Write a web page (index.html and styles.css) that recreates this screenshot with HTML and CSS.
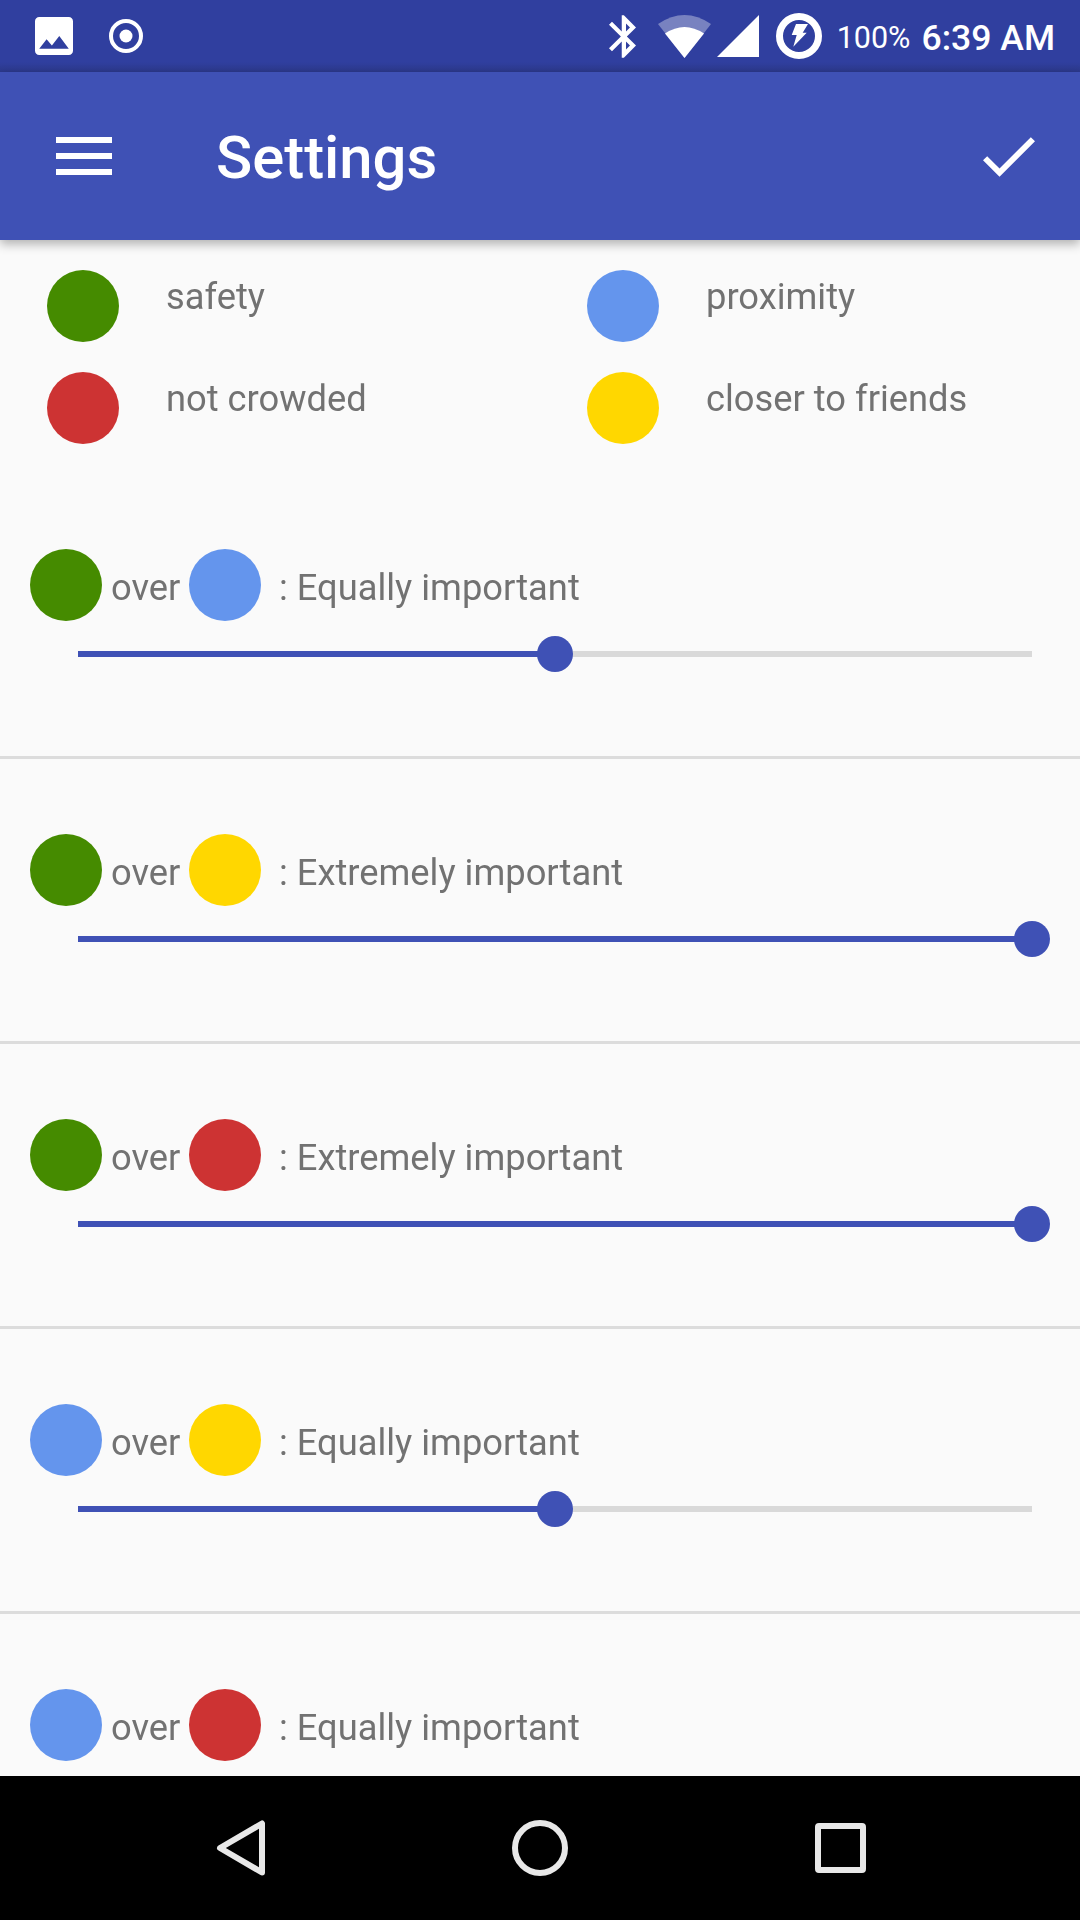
FILE: index.html
```html
<!DOCTYPE html>
<html lang="en">
<head>
<meta charset="utf-8">
<title>Settings</title>
<link rel="stylesheet" href="styles.css">
</head>
<body>
<div class="screen">
  <header class="statusbar">
    <div class="status-left">
      <svg class="ic-image" viewBox="3 3 18 18"><path fill="#fff" d="M21 19V5c0-1.1-.9-2-2-2H5c-1.1 0-2 .9-2 2v14c0 1.100.9 2 2 2h14c1.100 0 2-.9 2-2zM8.500 13.500l2.500 3.010L14.500 12l4.500 6H5l3.500-4.500z"/></svg>
      <svg class="ic-radio" viewBox="0 0 34 34"><circle cx="17" cy="17" r="15" fill="none" stroke="#fff" stroke-width="4"/><circle cx="17" cy="17" r="6.500" fill="#fff"/></svg>
    </div>
    <div class="status-right">
      <svg class="ic-bt" viewBox="5 2 12.710 20"><path fill="#fff" d="M17.710 7.710L12 2h-1v7.590L6.410 5 5 6.410 10.590 12 5 17.590 6.410 19 11 14.410V22h1l5.710-5.710-4.300-4.290 4.300-4.290zM13 5.830l1.880 1.880L13 9.590V5.830zm1.880 10.460L13 18.170v-3.760l1.880 1.880z"/></svg>
      <svg class="ic-wifi" viewBox="0 0 53 43"><path fill="#fff" fill-opacity=".35" d="M26.500 43L0 9Q26.500-9 53 9Z"/><path fill="#fff" d="M26.500 43L7 18.500Q26.500 5.500 46 18.500Z"/></svg>
      <svg class="ic-signal" viewBox="0 0 42 42"><path fill="#fff" d="M0 42L42 0V42Z"/></svg>
      <svg class="ic-batt" viewBox="0 0 46 46"><circle cx="23" cy="23" r="19.500" fill="none" stroke="#fff" stroke-width="7"/><path fill="#fff" d="M20 11H32L26.700 19.700H30.700L17.300 33.700L20.700 22H15.700Z"/></svg>
      <span class="batt-text">100%</span>
      <span class="clock">6:39 AM</span>
    </div>
  </header>

  <div class="toolbar">
    <div class="menu"><span></span><span></span><span></span></div>
    <h1 class="title">Settings</h1>
    <svg class="ic-check" viewBox="3.410 5.590 17.590 13.410"><path fill="#fff" d="M9 16.170L4.830 12l-1.420 1.410L9 19 21 7l-1.410-1.410z"/></svg>
  </div>

  <main class="content">
    <section class="legend">
      <div class="legend-item"><i class="dot green"></i><span class="legend-label">safety</span></div>
      <div class="legend-item"><i class="dot blue"></i><span class="legend-label">proximity</span></div>
      <div class="legend-item"><i class="dot red"></i><span class="legend-label">not crowded</span></div>
      <div class="legend-item"><i class="dot gold"></i><span class="legend-label">closer to friends</span></div>
    </section>

    <section class="row">
      <div class="compare"><i class="dot green"></i><span class="over">over</span><i class="dot blue"></i><span class="verdict">: Equally important</span></div>
      <div class="slider"><div class="fill" style="width:50%"></div><div class="thumb" style="left:50%"></div></div>
    </section>
    <section class="row">
      <div class="compare"><i class="dot green"></i><span class="over">over</span><i class="dot gold"></i><span class="verdict">: Extremely important</span></div>
      <div class="slider"><div class="fill" style="width:100%"></div><div class="thumb" style="left:100%"></div></div>
    </section>
    <section class="row">
      <div class="compare"><i class="dot green"></i><span class="over">over</span><i class="dot red"></i><span class="verdict">: Extremely important</span></div>
      <div class="slider"><div class="fill" style="width:100%"></div><div class="thumb" style="left:100%"></div></div>
    </section>
    <section class="row">
      <div class="compare"><i class="dot blue"></i><span class="over">over</span><i class="dot gold"></i><span class="verdict">: Equally important</span></div>
      <div class="slider"><div class="fill" style="width:50%"></div><div class="thumb" style="left:50%"></div></div>
    </section>
    <section class="row">
      <div class="compare"><i class="dot blue"></i><span class="over">over</span><i class="dot red"></i><span class="verdict">: Equally important</span></div>
      <div class="slider"><div class="fill" style="width:50%"></div><div class="thumb" style="left:50%"></div></div>
    </section>
  </main>

  <nav class="navbar">
    <div class="nav-slot"><svg class="ic-back" viewBox="0 0 49 56"><path fill="none" stroke="#e8e8e8" stroke-width="6" stroke-linejoin="round" d="M4 28L46 3.500V52.500Z"/></svg></div>
    <div class="nav-slot"><div class="ic-home"></div></div>
    <div class="nav-slot"><div class="ic-recent"></div></div>
  </nav>
</div>
</body>
</html>
```

FILE: styles.css
```css
* { box-sizing: border-box; }
html, body { margin: 0; padding: 0; }
body { font-family: Roboto, "Noto Sans", sans-serif; background: #fafafa; }

.screen {
  width: 1080px;
  height: 1920px;
  display: flex;
  flex-direction: column;
  overflow: hidden;
}

.statusbar {
  height: 72px;
  flex: none;
  display: flex;
  justify-content: space-between;
  align-items: center;
  padding: 0 25px 0 35px;
  color: #fff;
  background: linear-gradient(#303f9f 0, #303f9f 62px, #2c398c 72px);
}
.status-left, .status-right { display: flex; align-items: center; }
svg { display: block; flex: none; }
.ic-image { width: 38px; height: 38px; }
.ic-radio { width: 34px; height: 34px; margin-left: 36px; }
.ic-bt { width: 27px; height: 43px; }
.ic-wifi { width: 53px; height: 43px; margin-left: 22px; }
.ic-signal { width: 42px; height: 42px; margin-left: 6px; }
.ic-batt { width: 46px; height: 46px; margin-left: 17px; }
.batt-text { font-size: 30.5px; font-weight: 400; margin: 3px 0 0 15px; }
.clock { font-size: 35.6px; font-weight: 500; margin: 4px 0 0 11px; }

.toolbar {
  height: 168px;
  flex: none;
  position: relative;
  z-index: 1;
  display: flex;
  align-items: center;
  padding: 0 45px 0 56px;
  background: #3f51b5;
  box-shadow: 0 4px 10px rgba(0, 0, 0, .3);
  color: #fff;
}
.menu { width: 56px; display: flex; flex-direction: column; gap: 10px; }
.menu span { height: 6px; background: #fff; }
.title { margin: 3px 0 0 104px; font-size: 59.8px; font-weight: 500; flex: 1; }
.ic-check { width: 52px; height: 40px; margin-top: 2px; }

.content { flex: 1; min-height: 0; overflow: hidden; }

.dot { display: block; flex: none; width: 72px; height: 72px; border-radius: 50%; }
.green { background: #458b00; }
.blue { background: #6495ed; }
.red { background: #cd3333; }
.gold { background: #ffd700; }

.legend {
  display: grid;
  grid-template-columns: 540px 540px;
  row-gap: 30px;
  padding: 30px 0 30px 47px;
  will-change: transform;
}
.legend-item { display: flex; align-items: flex-start; }
.legend-label {
  margin: 6px 0 0 47px;
  font-size: 36.3px;
  line-height: 42px;
  color: #727272;
}

.row {
  height: 285px;
  padding-top: 75px;
  border-bottom: 3px solid #dcdcdc;
}
.compare {
  display: flex;
  align-items: center;
  padding-left: 30px;
  font-size: 36.3px;
  color: #727272;
  will-change: transform;
}
.over { margin: 4px 0 0 9px; width: 78px; }
.verdict { margin: 4px 0 0 18px; }

.slider {
  position: relative;
  width: 954px;
  height: 6px;
  margin: 30px 0 0 78px;
  background: #d9d9d9;
}
.fill { height: 100%; background: #3f51b5; }
.thumb {
  position: absolute;
  top: 50%;
  width: 36px;
  height: 36px;
  border-radius: 50%;
  background: #3f51b5;
  transform: translate(-50%, -50%);
}

.navbar {
  height: 144px;
  flex: none;
  display: flex;
  justify-content: center;
  align-items: center;
  background: #000;
}
.nav-slot { width: 300px; display: flex; justify-content: center; align-items: center; }
.ic-back { width: 49px; height: 56px; }
.ic-home { width: 56px; height: 56px; border: 6px solid #e8e8e8; border-radius: 50%; }
.ic-recent { width: 51px; height: 50px; border: 6px solid #e8e8e8; border-radius: 4px; }
```
